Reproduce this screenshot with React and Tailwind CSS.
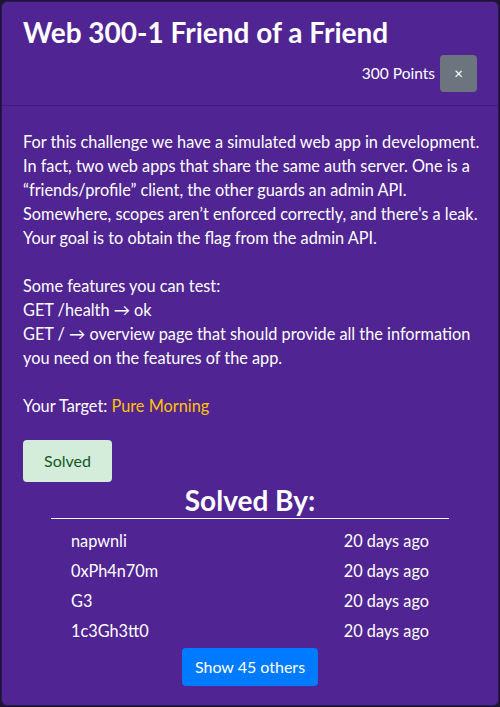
export default function App() {
  const solvers = [
    ['napwnli', '20 days ago'],
    ['0xPh4n70m', '20 days ago'],
    ['G3', '20 days ago'],
    ['1c3Gh3tt0', '20 days ago'],
  ]

  return (
    <div className="h-[707px] w-[500px] overflow-hidden bg-[#1b1530] p-px font-['Lato','Noto_Sans',sans-serif] text-white">
      <div className="flex h-[705px] flex-col rounded-md border border-[#2a1650] bg-[#502593]">
        {/* header */}
        <div className="border-b border-[#3f1c78] px-[21px] pt-[14px] pb-[13px]">
          <h1 className="text-[28px] leading-[32px] font-bold">Web 300-1 Friend of a Friend</h1>
          <div className="mt-[7px] flex items-center justify-end gap-[5px]">
            <span className="text-[15.5px]">300 Points</span>
            <button className="flex h-[37px] w-[37px] items-center justify-center rounded-[4px] bg-[#6c757d] text-[15px] leading-none">
              ×
            </button>
          </div>
        </div>

        {/* body */}
        <div className="flex flex-col px-[21px] pt-[24px] text-[16.3px] leading-[24px] whitespace-nowrap">
          <p>
            For this challenge we have a simulated web app in development.
            <br />
            In fact, two web apps that share the same auth server. One is a
            <br />
            “friends/profile” client, the other guards an admin API.
            <br />
            Somewhere, scopes aren’t enforced correctly, and there's a leak.
            <br />
            Your goal is to obtain the flag from the admin API.
          </p>
          <p className="mt-[24px]">Some features you can test:</p>
          <p>GET /health → ok</p>
          <p>
            GET / → overview page that should provide all the information
            <br />
            you need on the features of the app.
          </p>
          <p className="mt-[24px]">
            Your Target: <span className="text-[#ffc107]">Pure Morning</span>
          </p>

          <button className="mt-[22px] h-[42px] w-[89px] rounded-[4px] bg-[#d4edda] text-[16px] text-[#155724]">
            Solved
          </button>

          <h2 className="mt-[1px] text-center text-[28px] leading-[34px] font-bold">Solved By:</h2>
          <div className="mx-[28px] mt-[1px] h-px bg-white" />
          <div className="mx-[48px] mt-[7px] flex flex-col">
            {solvers.map(([name, when]) => (
              <div key={name} className="flex h-[30px] items-center justify-between">
                <span>{name}</span>
                <span>{when}</span>
              </div>
            ))}
          </div>
          <div className="mt-[2px] flex justify-center">
            <button className="h-[38px] rounded-[4px] bg-[#007bff] px-[13px] text-[16px]">Show 45 others</button>
          </div>
        </div>
      </div>
    </div>
  )
}
